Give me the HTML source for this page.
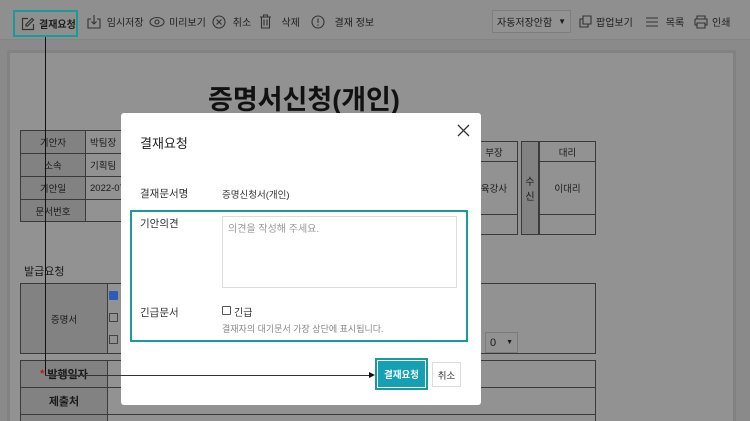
<!DOCTYPE html>
<html style="width:750px;height:421px;overflow:hidden"><head><meta charset="utf-8"><style>
*{margin:0;padding:0;box-sizing:border-box}
body{width:750px;height:421px;overflow:hidden;background:#8a8a8a;font-family:"Liberation Sans","Noto Sans CJK KR",sans-serif;position:relative;color:#1a1a1a}
.a{position:absolute;white-space:nowrap}
.tb{font-size:10px;color:#1e1e1e;display:flex;align-items:center;gap:4px}
.doc{left:7px;top:50px;width:729px;height:371px;background:#929292;border:3px solid #828282;border-bottom:none}
.cell{position:absolute;border:1px solid #3a3a3a;font-size:9.5px;display:flex;align-items:center;justify-content:center;white-space:nowrap;overflow:hidden}
.h{background:#828282}
.m{left:121px;top:113px;width:360px;height:292px;background:#fff;border-radius:3px}
svg{display:block}
</style></head><body>
<div class="a" style="left:0;top:0;width:750px;height:40px;background:#8f8f8f;border-bottom:1px solid #848484"></div>
<div class="a" style="left:13px;top:10px;width:65px;height:27px;border:2px solid #1a9a9a"></div>
<div class="a tb" style="left:21px;top:16px"><svg width="14" height="14" viewBox="0 0 14 14" fill="none" stroke="#333" stroke-width="1.2"><path d="M7 1.5H1.5v11h11V7"/><path d="M11 1.5l1.5 1.5-6 6H5V7.5z"/></svg><b style="font-size:10px">결재요청</b></div>
<div class="a tb" style="left:87px;top:14px;gap:3px"><svg width="14" height="15" viewBox="0 0 14 15" fill="none" stroke="#333" stroke-width="1.1"><path d="M4 5H1v9h12V5h-3M7 1v9M4.5 7.5L7 10l2.5-2.5"/></svg>&nbsp;임시저장</div>
<div class="a tb" style="left:149px;top:14px"><svg width="16" height="12" viewBox="0 0 16 12" fill="none" stroke="#333" stroke-width="1.1"><ellipse cx="8" cy="6" rx="7" ry="4.5"/><circle cx="8" cy="6" r="2"/></svg>미리보기</div>
<div class="a tb" style="left:212px;top:14px"><svg width="14" height="14" viewBox="0 0 14 14" fill="none" stroke="#333" stroke-width="1.1"><circle cx="7" cy="7" r="6"/><path d="M4.5 4.5l5 5M9.5 4.5l-5 5"/></svg>&nbsp;취소</div>
<div class="a tb" style="left:259px;top:14px"><svg width="13" height="15" viewBox="0 0 13 15" fill="none" stroke="#333" stroke-width="1.1"><path d="M1 3h11M4.5 3V1h4v2M2.5 3v11h8V3M5 5.5v6M8 5.5v6"/></svg>&nbsp;&nbsp;삭제</div>
<div class="a tb" style="left:311px;top:14px"><svg width="14" height="14" viewBox="0 0 14 14" fill="none" stroke="#333" stroke-width="1.1"><circle cx="7" cy="7" r="6"/><path d="M7 3.5v4.5M7 9.5v1.2"/></svg>&nbsp;&nbsp;결재 정보</div>
<div class="a" style="left:492px;top:10px;width:79px;height:23px;border:1px solid #7e7e7e;background:#929292;font-size:10px;padding:0 4px;display:flex;align-items:center;justify-content:space-between">자동저장안함<span style="font-size:8px">&#9660;</span></div>
<div class="a tb" style="left:579px;top:14px"><svg width="13" height="13" viewBox="0 0 13 13" fill="none" stroke="#333" stroke-width="1.1"><path d="M4 1h8v8H4zM4 4H1v8h8V9"/></svg>팝업보기</div>
<div class="a tb" style="left:645px;top:14px"><svg width="14" height="12" viewBox="0 0 14 12" fill="none" stroke="#333" stroke-width="1.1"><path d="M1 2h12M1 6h12M1 10h12"/></svg>&nbsp;목록</div>
<div class="a tb" style="left:694px;top:14px"><svg width="14" height="14" viewBox="0 0 14 14" fill="none" stroke="#333" stroke-width="1.1"><path d="M3 4V1h8v3M1 4h12v6h-2M3 10H1V4M3 8h8v5H3z"/></svg>인쇄</div>
<div class="a doc"></div>
<div class="a" style="left:208px;top:78px;font-size:27px;font-weight:bold;color:#111">증명서신청(개인)</div>
<div class="cell h" style="left:20px;top:130px;width:66px;height:24px">기안자</div>
<div class="cell" style="left:85px;top:130px;width:45px;height:24px;justify-content:flex-start;padding-left:4px">박팀장</div>
<div class="cell h" style="left:20px;top:153px;width:66px;height:24px">소속</div>
<div class="cell" style="left:85px;top:153px;width:45px;height:24px;justify-content:flex-start;padding-left:4px">기획팀</div>
<div class="cell h" style="left:20px;top:176px;width:66px;height:24px">기안일</div>
<div class="cell" style="left:85px;top:176px;width:45px;height:24px;justify-content:flex-start;padding-left:4px">2022-07</div>
<div class="cell h" style="left:20px;top:199px;width:66px;height:23px">문서번호</div>
<div class="cell" style="left:85px;top:199px;width:45px;height:23px"></div>
<div class="cell" style="left:470px;top:141px;width:48px;height:21px">부장</div>
<div class="cell" style="left:470px;top:161px;width:48px;height:54px">육강사</div>
<div class="cell" style="left:470px;top:214px;width:48px;height:21px"></div>
<div class="cell h" style="left:521px;top:141px;width:18px;height:94px;flex-direction:column;font-size:10px">수<br>신</div>
<div class="cell" style="left:539px;top:141px;width:57px;height:21px">대리</div>
<div class="cell" style="left:539px;top:161px;width:57px;height:54px">이대리</div>
<div class="cell" style="left:539px;top:214px;width:57px;height:21px"></div>
<div class="a" style="left:24px;top:263px;font-size:11px">발급요청</div>
<div class="cell h" style="left:20px;top:283px;width:88px;height:71px">증명서</div>
<div class="cell" style="left:107px;top:283px;width:489px;height:71px"></div>
<div class="a" style="left:109px;top:291px;width:9px;height:9px;background:#2c5bb8;border-radius:1px"></div>
<div class="a" style="left:109px;top:313px;width:9px;height:9px;border:1px solid #444"></div>
<div class="a" style="left:109px;top:335px;width:9px;height:9px;border:1px solid #444"></div>
<div class="a" style="left:485px;top:332px;width:33px;height:21px;border:1px solid #7a7a7a;font-size:11px;padding:0 4px;display:flex;align-items:center;justify-content:space-between">0<span style="font-size:7px">&#9660;</span></div>
<div class="cell h" style="left:20px;top:360px;width:88px;height:28px;font-size:11px;font-weight:bold"><span style="color:#b02020">*</span>&nbsp;발행일자</div>
<div class="cell" style="left:107px;top:360px;width:489px;height:28px"></div>
<div class="cell h" style="left:20px;top:387px;width:88px;height:28px;font-size:11px;font-weight:bold">제출처</div>
<div class="cell" style="left:107px;top:387px;width:489px;height:28px"></div>
<div class="cell h" style="left:20px;top:414px;width:88px;height:10px"></div>
<div class="cell" style="left:107px;top:414px;width:489px;height:10px"></div>
<div class="a m"></div>
<div class="a" style="left:140px;top:133px;font-size:13px;color:#222">결재요청</div>
<svg class="a" style="left:457px;top:124px" width="13" height="13" viewBox="0 0 13 13" stroke="#333" stroke-width="1.3"><path d="M1 1l11 11M12 1L1 12"/></svg>
<div class="a" style="left:140px;top:186px;font-size:10.5px;color:#333">결재문서명</div>
<div class="a" style="left:222px;top:187px;font-size:9.5px;color:#333">증명신청서(개인)</div>
<div class="a" style="left:130px;top:210px;width:338px;height:132px;border:2px solid #1a9a9a"></div>
<div class="a" style="left:140px;top:216px;font-size:10.5px;color:#333">기안의견</div>
<div class="a" style="left:222px;top:216px;width:235px;height:72px;border:1px solid #ddd;font-size:10px;color:#999;padding:3px 5px">의견을 작성해 주세요.</div>
<div class="a" style="left:140px;top:305px;font-size:10.5px;color:#333">긴급문서</div>
<div class="a" style="left:222px;top:306px;width:9px;height:9px;border:1px solid #555;border-radius:1px"></div>
<div class="a" style="left:234px;top:304px;font-size:10px;color:#333">긴급</div>
<div class="a" style="left:222px;top:322px;font-size:9px;color:#888">결재자의 대기문서 가장 상단에 표시됩니다.</div>
<div class="a" style="left:375px;top:358px;width:53px;height:32px;border:2px solid #1a9a9a;background:#fff"></div>
<div class="a" style="left:378px;top:361px;width:47px;height:26px;background:#16a0b4;color:#fff;font-size:9.5px;font-weight:bold;display:flex;align-items:center;justify-content:center">결재요청</div>
<div class="a" style="left:432px;top:362px;width:29px;height:25px;border:1px solid #ddd;font-size:9.5px;color:#333;display:flex;align-items:center;justify-content:center">취소</div>
<div class="a" style="left:45px;top:37px;width:1px;height:339px;background:#111"></div>
<div class="a" style="left:45px;top:375px;width:325px;height:1px;background:#333"></div>
<div class="a" style="left:369px;top:372px;width:0;height:0;border-left:6px solid #111;border-top:3.5px solid transparent;border-bottom:3.5px solid transparent"></div>
</body></html>
